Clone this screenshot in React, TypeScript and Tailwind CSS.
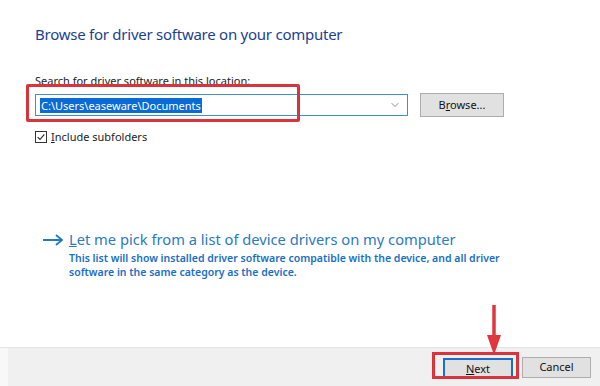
import { ChevronDown } from "lucide-react";

const font = { fontFamily: '"Noto Sans", "Open Sans", sans-serif' };

export default function App() {
  return (
    <div
      className="w-[600px] h-[386px] bg-white flex flex-col overflow-hidden text-[#1a1a1a]"
      style={font}
    >
      {/* Content */}
      <div className="flex-1 flex flex-col pl-[35px] pr-[20px]">
        <h1 className="mt-[24px] text-[15px] leading-[20px] text-[#1c3f94] tracking-[-0.25px]">
          Browse for driver software on your computer
        </h1>

        <p className="mt-[30px] text-[11px] leading-[14px] text-[#222]">
          Search for driver software in this location:
        </p>

        <div className="mt-[5px] flex items-center gap-[12px]">
          <div className="relative">
            <div className="w-[373px] h-[22px] border border-[#3c8fd0] bg-white flex items-center pl-[4px] pr-[6px]">
              <span className="bg-[#0a6ad6] text-white text-[11px] leading-[15px] px-[1px]">
                C:\Users\easeware\Documents
              </span>
              <ChevronDown className="ml-auto w-[12px] h-[12px] text-[#666]" strokeWidth={1.5} />
            </div>
            {/* highlight box */}
            <div className="absolute left-[-9px] top-[-10px] w-[274px] h-[38px] border-[3px] border-[#d9333c] rounded-[2px]" />
          </div>
          <button className="w-[84px] h-[24px] bg-[#e1e1e1] border border-[#adadad] text-[11px] text-[#111]">
            B<span className="underline">r</span>owse...
          </button>
        </div>

        <label className="mt-[13px] flex items-center gap-[4px] text-[11px] leading-[14px] text-[#222]">
          <span className="w-[12px] h-[12px] border border-[#333] bg-white flex items-center justify-center">
            <svg viewBox="0 0 12 12" className="w-[10px] h-[10px]">
              <path d="M2 6.2 L4.8 9 L10 2.8" fill="none" stroke="#222" strokeWidth="1.3" />
            </svg>
          </span>
          <span>
            <span className="underline">I</span>nclude subfolders
          </span>
        </label>

        <div className="mt-[85px] flex items-start gap-[5px] pl-[7px]">
          <svg viewBox="0 0 22 12" className="w-[22px] h-[12px] mt-[5px] shrink-0">
            <path d="M1 6 H20 M14 1 L20 6 L14 11" fill="none" stroke="#1f78c8" strokeWidth="1.8" />
          </svg>
          <div className="flex flex-col">
            <span className="text-[14.7px] leading-[20px] text-[#2a7ac4]">
              <span className="underline">L</span>et me pick from a list of device drivers on my computer
            </span>
            <span className="mt-[2px] text-[10.5px] leading-[14px] font-semibold text-[#1a6fc4] w-[445px]">
              This list will show installed driver software compatible with the device, and all driver
              software in the same category as the device.
            </span>
          </div>
        </div>
      </div>

      {/* Footer */}
      <div className="relative h-[39px] bg-[#f0f0f0] border-t border-[#e4e4e4] flex items-center justify-end gap-[9px] pr-[9px]">
        <div className="absolute left-0 top-0 bottom-0 w-[8px] bg-[#f8f8f8]" />
        <div className="relative">
          <button className="w-[70px] h-[21px] bg-[#e1e1e1] border-2 border-[#1c6fc8] text-[11px] text-[#111]">
            <span className="underline">N</span>ext
          </button>
          <div className="absolute left-[-11px] top-[-3px] w-[87px] h-[27px] border-[3px] border-[#d9333c]" />
          {/* red arrow */}
          <svg
            viewBox="0 0 16 52"
            className="absolute left-[43px] top-[-50px] w-[16px] h-[52px]"
          >
            <path d="M8 0 V34" stroke="#e0363e" strokeWidth="3.5" />
            <path d="M1 30 L15 30 L8 50 Z" fill="#e0363e" />
          </svg>
        </div>
        <button className="w-[69px] h-[21px] bg-[#e1e1e1] border border-[#adadad] text-[11px] text-[#111]">
          Cancel
        </button>
      </div>
    </div>
  );
}
